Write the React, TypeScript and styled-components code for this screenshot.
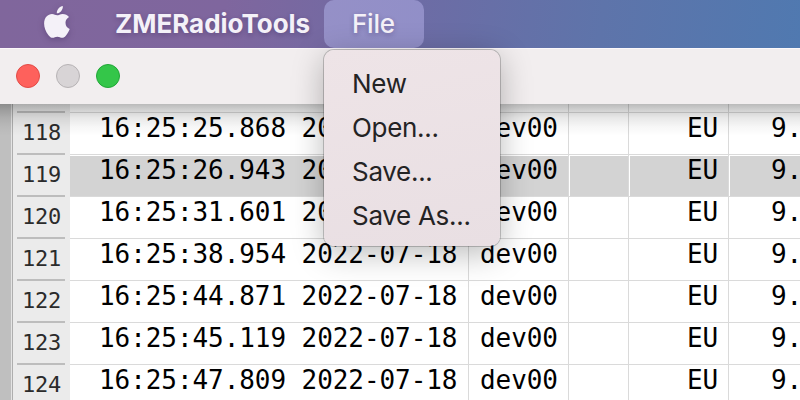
import React from "react";
import styled, { createGlobalStyle } from "styled-components";

const GlobalStyle = createGlobalStyle`
  * { box-sizing: border-box; }
  html, body { margin: 0; padding: 0; overflow: hidden; }
`;

const Screen = styled.div`
  position: relative;
  display: flex;
  flex-direction: column;
  width: 800px;
  height: 400px;
  overflow: hidden;
  background: #fff;
  font-family: Inter, sans-serif;
`;

const MenuBar = styled.header`
  display: flex;
  flex: 0 0 48px;
  align-items: center;
  background: linear-gradient(97deg, #80669c 0%, #7f669e 28%, #6d6ca5 52%, #5e74aa 75%, #5079b0 100%);
  color: #f4f1f8;
  text-shadow: 0 2px 5px rgba(40, 20, 70, 0.3);
`;

const AppleLogo = styled.svg`
  width: 26px;
  height: 32px;
  margin: -4px 0 0 44px;
  overflow: visible;
  filter: drop-shadow(0 2px 3px rgba(40, 20, 70, 0.3));
`;

const AppName = styled.div`
  width: 209px;
  margin-left: 45px;
  font-size: 26px;
  line-height: 48px;
  font-weight: 700;
  letter-spacing: -0.03px;
  white-space: nowrap;
`;

const MenuTitle = styled.div`
  width: 100px;
  height: 48px;
  padding-left: 28px;
  border-radius: 10px;
  background: linear-gradient(100deg, #9590c7, #918fc8);
  font-size: 26px;
  line-height: 48px;
  font-weight: 500;
  letter-spacing: -0.2px;
`;

const TitleBar = styled.div`
  display: flex;
  flex: 0 0 56px;
  align-items: center;
  gap: 16px;
  padding-left: 16px;
  box-shadow: inset 0 1px 0 #fcf8fa;
  background: #f2eeef;
`;

const WindowButton = styled.span<{ $fill: string; $edge: string }>`
  width: 24px;
  height: 24px;
  border: 1px solid ${(p) => p.$edge};
  border-radius: 50%;
  background: ${(p) => p.$fill};
`;

const WindowBody = styled.main`
  position: relative;
  display: flex;
  flex: 1;
  min-height: 0;
  overflow: hidden;

  &::after {
    content: "";
    position: absolute;
    inset: 0 0 auto 0;
    height: 32px;
    background: linear-gradient(
      rgba(0, 0, 0, 0.27) 0,
      rgba(0, 0, 0, 0.18) 6px,
      rgba(0, 0, 0, 0.09) 14px,
      rgba(0, 0, 0, 0.03) 23px,
      transparent
    );
  }
`;

const Gutter = styled.div`
  flex: 0 0 13px;
  border-right: 1px solid #aeaeae;
  background: linear-gradient(90deg, #bfbfbf 11px, #e4e4e4 11px);
`;

const Table = styled.div`
  display: flex;
  flex: 1;
  flex-direction: column;
  margin-top: -34px;
  min-width: 0;
`;

const Row = styled.div`
  display: grid;
  flex: 0 0 42px;
  grid-template-columns: 57px 399px 100px 60px 100px 1fr;
  height: 42px;
`;

const RowNumber = styled.div`
  position: relative;
  padding: 9px 0 0 9px;
  background: #ebebeb;
  color: #2b2b2b;
  font: 22px/24px "DejaVu Sans Mono", monospace;
  letter-spacing: -0.2px;

  &::before {
    content: "";
    position: absolute;
    top: -1px;
    left: 4px;
    width: 48px;
    height: 2px;
    background: #bdbdbd;
  }
`;

const Cell = styled.div<{ $selected?: boolean; $indent?: number }>`
  height: 42px;
  padding-left: ${(p) => p.$indent ?? 0}px;
  overflow: hidden;
  border-top: 1px solid #dadada;
  border-right: 1px solid #dadada;
  background: ${(p) => (p.$selected ? "#d3d3d3" : "#fff")};
  box-shadow: ${(p) => (p.$selected ? "inset 1px 1px 0 #fff" : "none")};
  color: #000;
  font: 26px/30px "DejaVu Sans Mono", monospace;
  letter-spacing: -0.07px;
  white-space: pre;

  &:nth-child(2) {
    box-shadow: ${(p) => (p.$selected ? "inset 0 1px 0 #fff" : "none")};
  }

  &:last-child {
    border-right: 0;
  }
`;

const Menu = styled.nav`
  position: absolute;
  top: 50px;
  left: 324px;
  width: 176px;
  height: 196px;
  padding: 12px 0 0 28px;
  border-radius: 10px;
  background: linear-gradient(170deg, #eee4e7, #e9dfe3);
  box-shadow:
    0 0 0 1px rgba(0, 0, 0, 0.2),
    0 7px 32px rgba(0, 0, 0, 0.28);
`;

const MenuItem = styled.div`
  height: 44px;
  color: #242324;
  font-size: 26px;
  line-height: 43px;
  letter-spacing: -0.3px;
  white-space: nowrap;
`;

const records = [
  { id: "117", time: "", device: "", region: "", value: "" },
  { id: "118", time: "16:25:25.868 2022-07-18", device: "dev00", region: "EU", value: "9." },
  { id: "119", time: "16:25:26.943 2022-07-18", device: "dev00", region: "EU", value: "9.", selected: true },
  { id: "120", time: "16:25:31.601 2022-07-18", device: "dev00", region: "EU", value: "9." },
  { id: "121", time: "16:25:38.954 2022-07-18", device: "dev00", region: "EU", value: "9." },
  { id: "122", time: "16:25:44.871 2022-07-18", device: "dev00", region: "EU", value: "9." },
  { id: "123", time: "16:25:45.119 2022-07-18", device: "dev00", region: "EU", value: "9." },
  { id: "124", time: "16:25:47.809 2022-07-18", device: "dev00", region: "EU", value: "9." },
];

export default function App() {
  return (
    <Screen>
      <GlobalStyle />
      <MenuBar>
        <AppleLogo viewBox="0 0 26 32" fill="#f4f1f8">
          <path d="M18.800 0c.3 2-.6 3.900-1.700 5.200-1.100 1.300-2.800 2.200-4.300 2.100-.2-1.900.7-3.800 1.700-4.900C15.600 1 17.400.1 18.800 0Z" />
          <path d="M25 11c-2.200 1.400-3.500 3.200-3.500 5.800 0 3.100 1.800 5.200 4.200 6.300-.8 2.400-2.300 4.800-3.900 6.700-1.200 1.400-2.200 2-3.700 2-1.700 0-2.600-1.100-4.700-1.100-2.100 0-3.100 1.100-4.700 1.100-1.600 0-2.900-.9-4.200-2.600C1.700 25.900.1 21.500.1 17.600.1 11.400 4 8 8 8c2.100 0 3.700 1.300 5.100 1.300 1.300 0 3.200-1.400 5.600-1.400 2.500 0 4.900 1.100 6.300 3.100Z" />
        </AppleLogo>
        <AppName>ZMERadioTools</AppName>
        <MenuTitle>File</MenuTitle>
      </MenuBar>
      <TitleBar>
        <WindowButton $fill="#fe615c" $edge="#e24b46" />
        <WindowButton $fill="#d8d4d6" $edge="#b7b3b5" />
        <WindowButton $fill="#34c649" $edge="#21a637" />
      </TitleBar>
      <WindowBody>
        <Gutter />
        <Table>
          {records.map((r) => (
            <Row key={r.id}>
              <RowNumber>{r.time && r.id}</RowNumber>
              <Cell $selected={r.selected} $indent={29}>{r.time}</Cell>
              <Cell $selected={r.selected} $indent={11}>{r.device}</Cell>
              <Cell $selected={r.selected} />
              <Cell $selected={r.selected} $indent={58}>{r.region}</Cell>
              <Cell $selected={r.selected} $indent={42}>{r.value}</Cell>
            </Row>
          ))}
        </Table>
      </WindowBody>
      <Menu>
        <MenuItem>New</MenuItem>
        <MenuItem>Open...</MenuItem>
        <MenuItem>Save...</MenuItem>
        <MenuItem>Save As...</MenuItem>
      </Menu>
    </Screen>
  );
}
